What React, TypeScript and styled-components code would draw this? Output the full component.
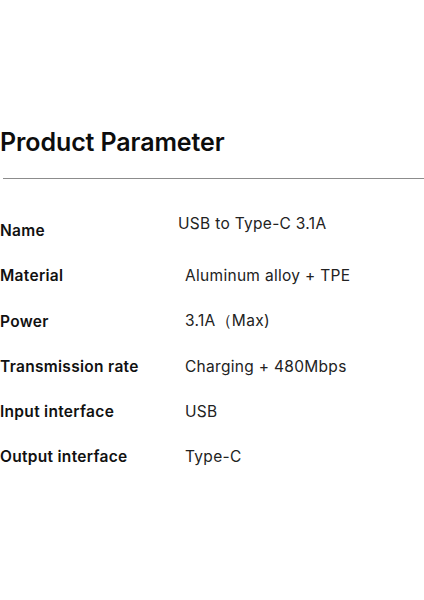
import React from "react"
import styled, { createGlobalStyle } from "styled-components"

const GlobalStyle = createGlobalStyle`
    html, body {
        margin: 0;
        padding: 0;
        background: #ffffff;
    }
    body {
        font-family: Inter, "Noto Sans", sans-serif;
        color: #111111;
    }
`

type Row = { label: string; value: string; shiftX?: number; shiftY?: number }

const rows: Row[] = [
    { label: "Name", value: "USB to Type-C 3.1A", shiftX: -7, shiftY: -7 },
    { label: "Material", value: "Aluminum alloy + TPE" },
    { label: "Power", value: "3.1A（Max)" },
    { label: "Transmission rate", value: "Charging + 480Mbps" },
    { label: "Input interface", value: "USB" },
    { label: "Output interface", value: "Type-C" },
]

export default function App() {
    return (
        <>
            <GlobalStyle />
            <Page>
                <Title>Product Parameter</Title>
                <Divider />
                <Table>
                    {rows.map((r) => (
                        <TableRow key={r.label}>
                            <Label>{r.label}</Label>
                            <Value $dx={r.shiftX ?? 0} $dy={r.shiftY ?? 0}>
                                {r.value}
                            </Value>
                        </TableRow>
                    ))}
                </Table>
            </Page>
        </>
    )
}

const Page = styled.div`
    width: 424px;
    height: 600px;
    padding-top: 127px;
    box-sizing: border-box;
    display: flex;
    flex-direction: column;
`

const Title = styled.h1`
    margin: 0;
    font-size: 25px;
    line-height: 30px;
    font-weight: 600;
    letter-spacing: -0.1px;
    color: #0d0d0d;
`

const Divider = styled.div`
    margin: 21px 0 0 3px;
    height: 1px;
    background: #8c8c8c;
`

const Table = styled.div`
    margin-top: 41px;
    display: flex;
    flex-direction: column;
    gap: 25.4px;
`

const TableRow = styled.div`
    display: grid;
    grid-template-columns: 185px 1fr;
    align-items: center;
    height: 20px;
`

const Label = styled.div`
    font-size: 15.5px;
    font-weight: 600;
    letter-spacing: 0.3px;
    color: #111111;
`

const Value = styled.div<{ $dx: number; $dy: number }>`
    font-size: 15.5px;
    font-weight: 400;
    letter-spacing: 0.3px;
    color: #222222;
    margin-left: ${(p) => p.$dx}px;
    margin-top: ${(p) => p.$dy * 2}px;
`
